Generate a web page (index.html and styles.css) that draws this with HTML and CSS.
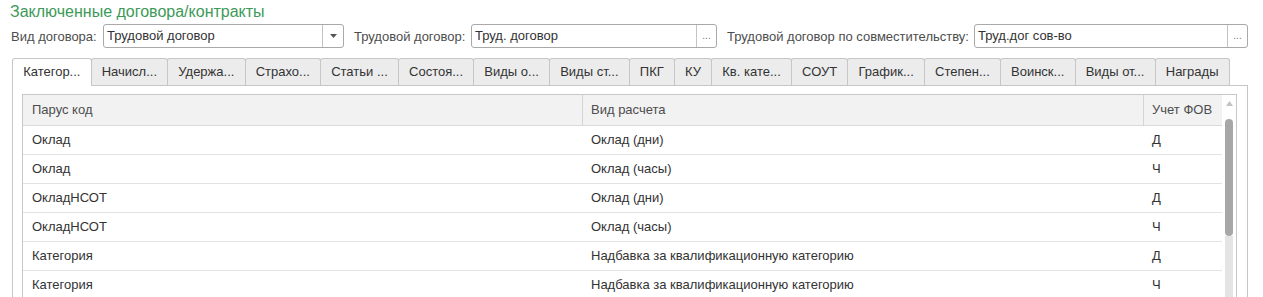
FILE: index.html
```html
<!DOCTYPE html>
<html lang="ru">
<head>
<meta charset="utf-8">
<title>Заключенные договора/контракты</title>
<link rel="stylesheet" href="styles.css">
</head>
<body>
<div class="title">Заключенные договора/контракты</div>
<div class="filters">
  <span class="label l1">Вид договора:</span>
  <div class="field w1"><span class="val">Трудовой договор</span><span class="btn"><svg width="7" height="4" viewBox="0 0 7 4"><path d="M0 0H7L3.5 4Z" fill="#555"/></svg></span></div>
  <span class="label l2">Трудовой договор:</span>
  <div class="field w2"><span class="val">Труд. договор</span><span class="btn dots">...</span></div>
  <span class="label l3">Трудовой договор по совместительству:</span>
  <div class="field w3"><span class="val">Труд.дог сов-во</span><span class="btn dots">...</span></div>
</div>
<div class="tabs">
  <div class="tab active">Категор...</div>
  <div class="tab">Начисл...</div>
  <div class="tab">Удержа...</div>
  <div class="tab">Страхо...</div>
  <div class="tab">Статьи ...</div>
  <div class="tab">Состоя...</div>
  <div class="tab">Виды о...</div>
  <div class="tab">Виды ст...</div>
  <div class="tab">ПКГ</div>
  <div class="tab">КУ</div>
  <div class="tab">Кв. кате...</div>
  <div class="tab">СОУТ</div>
  <div class="tab">График...</div>
  <div class="tab">Степен...</div>
  <div class="tab">Воинск...</div>
  <div class="tab">Виды от...</div>
  <div class="tab">Награды</div>
</div>
<div class="panel">
  <div class="table">
    <div class="rows">
      <div class="row head"><div class="c">Парус код</div><div class="c">Вид расчета</div><div class="c">Учет ФОВ</div></div>
      <div class="row"><div class="c">Оклад</div><div class="c">Оклад (дни)</div><div class="c">Д</div></div>
      <div class="row"><div class="c">Оклад</div><div class="c">Оклад (часы)</div><div class="c">Ч</div></div>
      <div class="row"><div class="c">ОкладНСОТ</div><div class="c">Оклад (дни)</div><div class="c">Д</div></div>
      <div class="row"><div class="c">ОкладНСОТ</div><div class="c">Оклад (часы)</div><div class="c">Ч</div></div>
      <div class="row"><div class="c">Категория</div><div class="c">Надбавка за квалификационную категорию</div><div class="c">Д</div></div>
      <div class="row"><div class="c">Категория</div><div class="c">Надбавка за квалификационную категорию</div><div class="c">Ч</div></div>
    </div>
    <div class="sb">
      <svg class="arrow" width="7" height="5" viewBox="0 0 7 5"><path d="M0 5H7L3.5 0Z" fill="#c2c2c2"/></svg>
      <div class="thumb"></div>
      <div class="track"></div>
    </div>
  </div>
</div>
</body>
</html>
```
FILE: styles.css
```css
html, body {
  margin: 0;
  padding: 0;
  background: #fff;
  font-family: "Liberation Sans", Arial, sans-serif;
  font-size: 13px;
  color: #333;
}
.title {
  height: 22px;
  padding: 2px 0 0 10px;
  box-sizing: border-box;
  font-size: 16px;
  line-height: 20px;
  color: #3d9a58;
}
.filters {
  display: flex;
  align-items: center;
  height: 24px;
  margin: 2px 0 0 11px;
}
.label {
  color: #4d4d4d;
  white-space: nowrap;
  flex: none;
}
.l1 { width: 92px; }
.l2 { width: 117px; }
.l3 { width: 247px; }
.field {
  display: flex;
  flex: none;
  height: 24px;
  box-sizing: border-box;
  border: 1px solid #a9a9a9;
  border-radius: 3px;
  margin-right: 10px;
  background: #fff;
}
.w1 { width: 241px; }
.w2 { width: 246px; }
.w3 { width: 274px; }
.val {
  flex: 1;
  padding-left: 3px;
  line-height: 22px;
  color: #333;
  white-space: nowrap;
  overflow: hidden;
}
.btn {
  width: 20px;
  border-left: 1px solid #c4c4c4;
  display: flex;
  align-items: center;
  justify-content: center;
}
.dots {
  font-size: 10px;
  color: #777;
  align-items: flex-end;
  padding-bottom: 6px;
  box-sizing: border-box;
}
.tabs {
  display: flex;
  margin: 10px 0 0 12px;
  position: relative;
  z-index: 1;
}
.tab {
  height: 26px;
  line-height: 26px;
  padding: 0 10.15px;
  border: 1px solid #c6c6c6;
  border-bottom: none;
  border-radius: 3px 3px 0 0;
  background: #ececec;
  margin-left: -1px;
  white-space: nowrap;
  color: #333;
}
.tab:first-child { margin-left: 0; }
.tab.active {
  background: #fff;
  height: 27px;
  margin-bottom: -1px;
}
.panel {
  margin-left: 12px;
  width: 1236px;
  box-sizing: border-box;
  border: 1px solid #c6c6c6;
  padding: 8px 10px 0 9px;
  height: 230px;
}
.table {
  display: flex;
  border: 1px solid #c8c8c8;
  border-bottom: none;
}
.rows {
  flex: 1;
}
.row {
  display: grid;
  grid-template-columns: 560px 561px 1fr;
  height: 29px;
  box-sizing: border-box;
  border-bottom: 1px solid #e2e2e2;
}
.row .c {
  line-height: 28px;
  padding-left: 9px;
  white-space: nowrap;
  overflow: hidden;
}
.row .c + .c { padding-left: 8px; }
.row.head {
  height: 31px;
  background: #f2f2f2;
  border-bottom: 1px solid #dadada;
  color: #4d4d4d;
}
.row.head .c {
  line-height: 30px;
}
.row.head .c:not(:last-child) {
  border-right: 1px solid #d4d4d4;
}
.sb {
  width: 14px;
  display: flex;
  flex-direction: column;
  align-items: center;
}
.arrow {
  margin-top: 6px;
}
.thumb {
  margin-top: 13px;
  width: 8px;
  height: 117px;
  border-radius: 4px;
  background: #a7a7a7;
}
.track {
  flex: 1;
  width: 8px;
  background: #e4e4e4;
}
```
